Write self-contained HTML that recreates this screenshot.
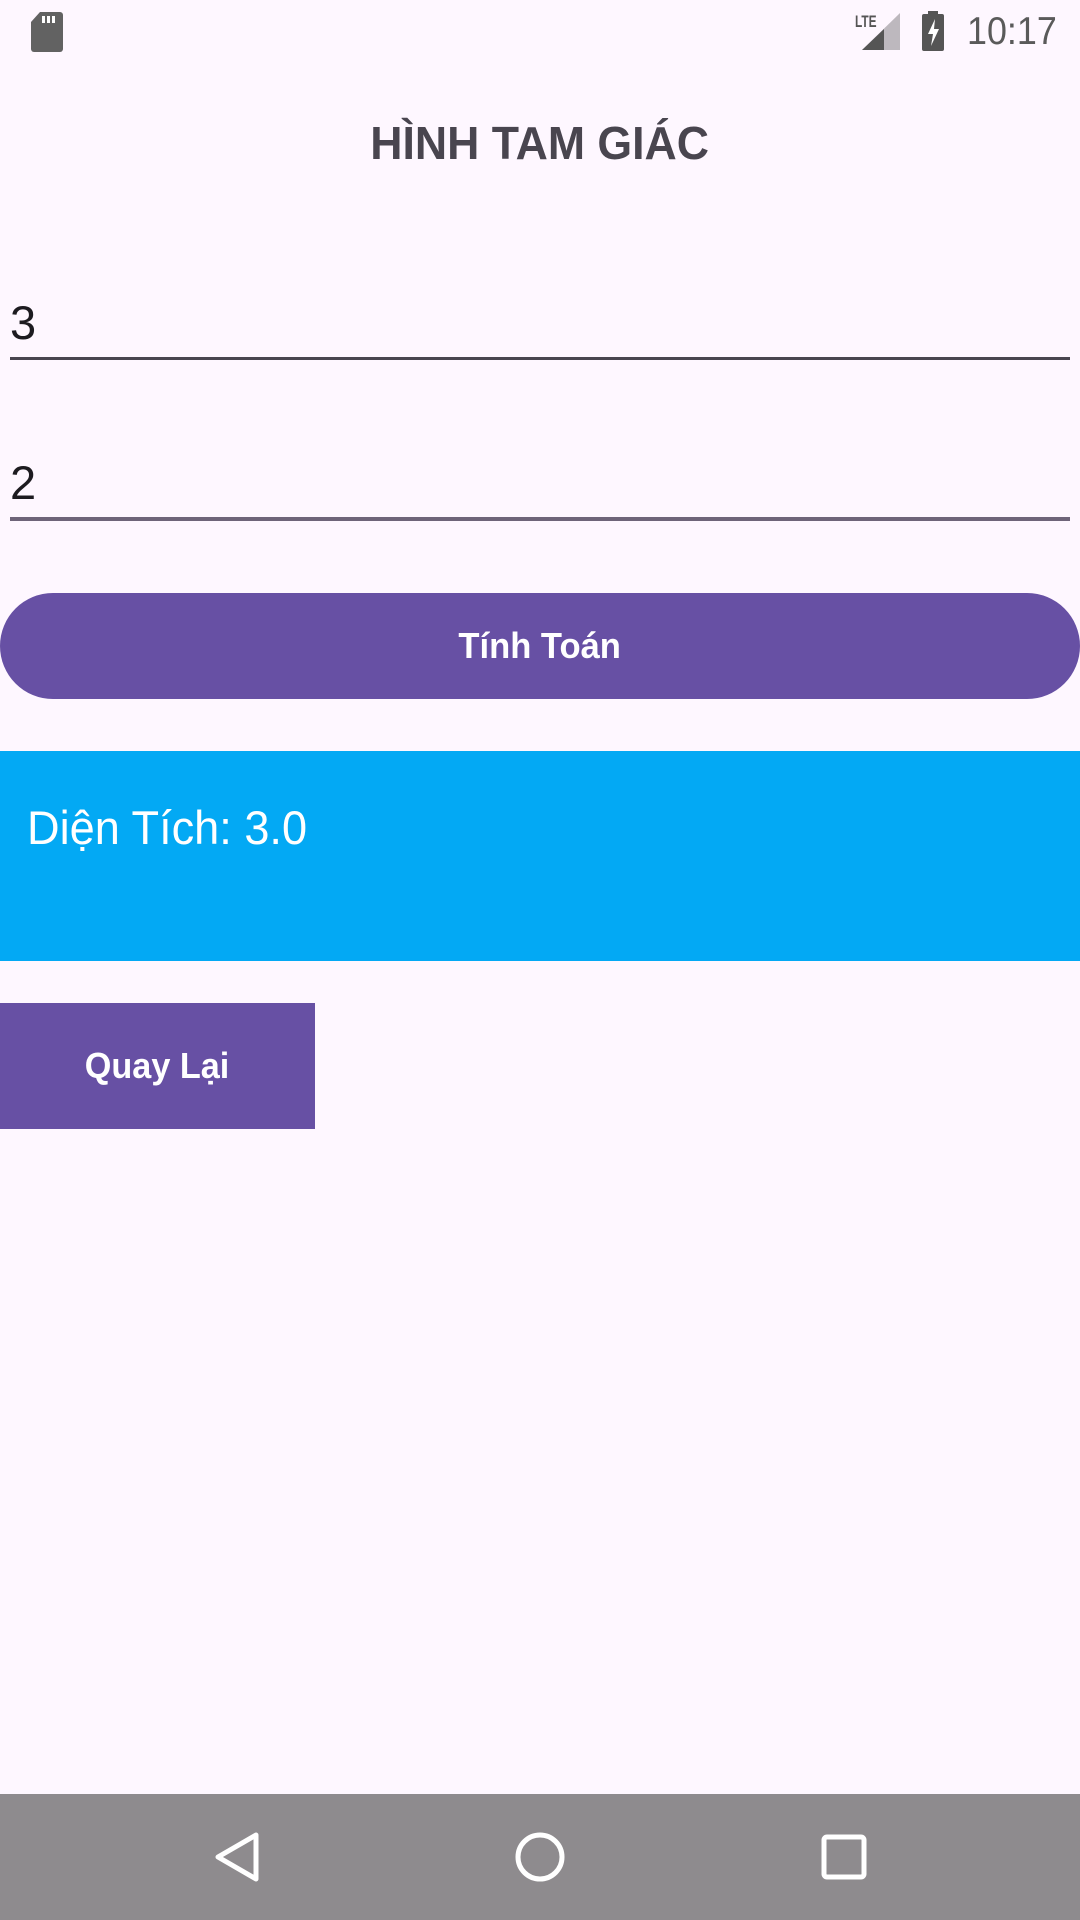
<!DOCTYPE html>
<html><head><meta charset="utf-8"><style>
*{margin:0;padding:0;box-sizing:border-box}
body{width:1080px;height:1920px;background:#FEF7FF;position:relative;overflow:hidden;font-family:"Liberation Sans",sans-serif}
.abs{position:absolute}
.t{white-space:nowrap;transform-origin:left center}
</style></head><body>
<!-- status bar -->
<svg class="abs" style="left:30px;top:12px" width="34" height="40" viewBox="0 0 34 40"><path d="M10 0H30a3 3 0 0 1 3 3V37a3 3 0 0 1-3 3H4a3 3 0 0 1-3-3V10Z" fill="#626262"/><rect x="12" y="4" width="3" height="7" fill="#fff"/><rect x="17" y="4" width="3" height="7" fill="#fff"/><rect x="22" y="4" width="3" height="7" fill="#fff"/></svg>
<div class="abs t" style="left:855px;top:12px;font-size:17px;font-weight:bold;color:#555;transform:scaleX(.7)">LTE</div>
<svg class="abs" style="left:862px;top:13px" width="40" height="37"><polygon points="0,37 38,37 38,0" fill="#bdb8be"/><polygon points="0,37 22,37 22,16" fill="#555"/></svg>
<svg class="abs" style="left:922px;top:11px" width="22" height="40"><rect x="6" y="0" width="10" height="4" fill="#555"/><rect x="0" y="3" width="22" height="37" rx="2" fill="#555"/><path d="M13 8L6 23h5l-2 12 8-17h-5z" fill="#fff"/></svg>
<div class="abs t" style="left:967px;top:10px;font-size:39px;color:#5a5a5a;transform:scaleX(.92)">10:17</div>
<!-- title -->
<div class="abs" style="left:0;width:1080px;top:116px;text-align:center;font-size:46px;font-weight:bold;color:#49454F"><span style="display:inline-block;transform:scaleX(.97)">HÌNH TAM GIÁC</span></div>
<!-- inputs -->
<div class="abs t" style="left:10px;top:295px;font-size:47px;color:#1d1b20">3</div>
<div class="abs" style="left:10px;top:357px;width:1060px;height:3px;background:#49454F"></div>
<div class="abs t" style="left:10px;top:455px;font-size:47px;color:#1d1b20">2</div>
<div class="abs" style="left:10px;top:517px;width:1060px;height:4px;background:#6E6479"></div>
<!-- button -->
<div class="abs" style="left:0;top:593px;width:1080px;height:106px;border-radius:53px;background:#6750A4;color:#fff;text-align:center;line-height:106px;font-size:36px;font-weight:bold"><span style="display:inline-block;transform:scaleX(.96)">Tính Toán</span></div>
<!-- result -->
<div class="abs" style="left:0;top:751px;width:1080px;height:210px;background:#03A9F4"></div>
<div class="abs t" style="left:27px;top:800px;font-size:47px;color:#fff;transform:scaleX(.96)">Diện Tích: 3.0</div>
<!-- back -->
<div class="abs" style="left:0;top:1003px;width:315px;height:126px;background:#6750A4;color:#fff;text-align:center;line-height:126px;font-size:36px;font-weight:bold"><span style="display:inline-block;transform:scaleX(.95)">Quay Lại</span></div>
<!-- nav -->
<div class="abs" style="left:0;top:1794px;width:1080px;height:126px;background:#8E8B8E"></div>
<svg class="abs" style="left:0;top:1794px" width="1080" height="126"><path d="M256 41L218 63L256 85Z" fill="none" stroke="#fff" stroke-width="5" stroke-linejoin="round"/><circle cx="540" cy="63" r="22" fill="none" stroke="#fff" stroke-width="5"/><rect x="824" y="43" width="40" height="40" rx="3" fill="none" stroke="#fff" stroke-width="5"/></svg>
</body></html>
